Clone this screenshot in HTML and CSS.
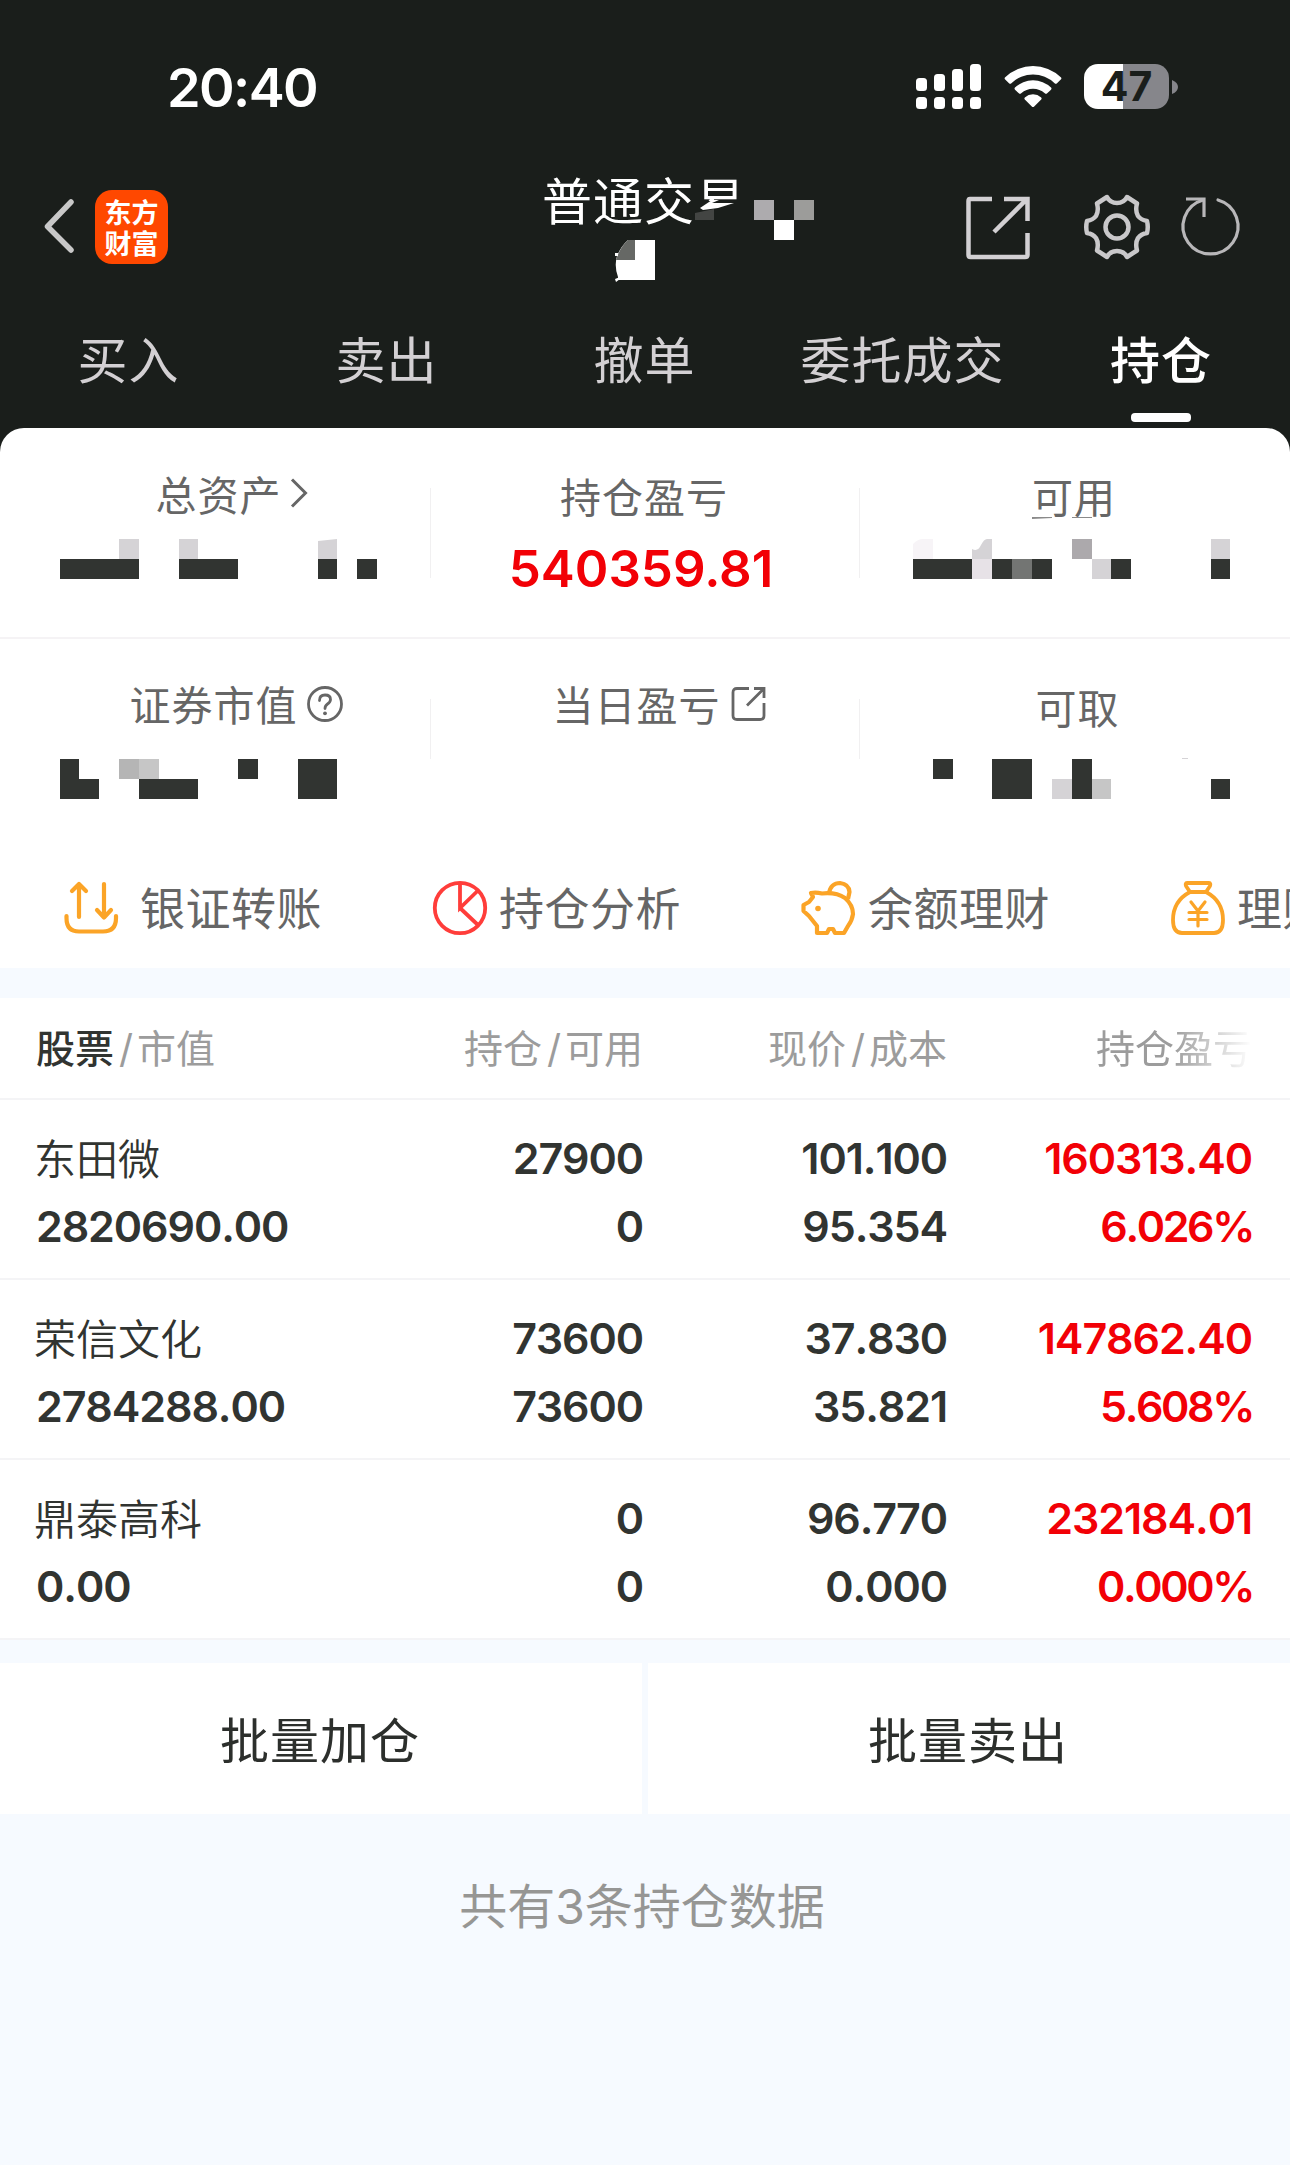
FILE: index.html
```html
<!DOCTYPE html>
<html lang="zh-CN">
<head>
  <meta charset="UTF-8">
  <meta name="viewport" content="width=device-width, initial-scale=1.0">
  <title>普通交易 - 持仓</title>
  <link rel="stylesheet" href="styles.css">
</head>
<body>
  <header class="top">
    <div class="status">
      <span class="time">20:40</span>
      <div class="status-icons">
        <svg width="65" height="45" viewBox="0 0 65 45" fill="#fff">
          <rect x="0" y="14" width="11" height="13" rx="3.5"/>
          <rect x="18" y="10" width="11" height="17" rx="3.5"/>
          <rect x="36" y="5" width="11" height="22" rx="3.5"/>
          <rect x="54" y="0" width="11" height="27" rx="3.5"/>
          <rect x="0" y="33" width="11" height="12" rx="3.5"/>
          <rect x="18" y="33" width="11" height="12" rx="3.5"/>
          <rect x="36" y="33" width="11" height="12" rx="3.5"/>
          <rect x="54" y="33" width="11" height="12" rx="3.5"/>
        </svg>
        <svg class="wifi" width="58" height="43" viewBox="0 0 58 43" fill="#fff">
          <path d="M1.2 12.2 Q0 13.4 1.2 14.6 L5 18.2 Q6.2 19.2 7.4 18.2 A31 31 0 0 1 50.6 18.2 Q51.8 19.2 53 18.2 L56.8 14.6 Q58 13.4 56.8 12.2 A40 40 0 0 0 1.2 12.2Z"/>
          <path d="M11 22.5 Q10 23.6 11 24.7 L14.8 28.3 Q16 29.3 17.2 28.3 A17.5 17.5 0 0 1 40.8 28.3 Q42 29.3 43.2 28.3 L47 24.7 Q48 23.6 47 22.5 A26 26 0 0 0 11 22.5Z"/>
          <path d="M20.8 32.4 Q19.8 33.4 20.8 34.5 L27.8 41.6 Q29 42.6 30.2 41.6 L37.2 34.5 Q38.2 33.4 37.2 32.4 A12.6 12.6 0 0 0 20.8 32.4Z"/>
        </svg>
        <div class="battery"><span>47</span></div>
        <svg class="nub" width="6" height="14" viewBox="0 0 6 14"><path d="M0 0 Q6 2.500 6 7 T0 14Z" fill="#86868b"/></svg>
      </div>
    </div>

    <div class="navbar">
      <div class="nav-left">
        <svg width="32" height="56" viewBox="0 0 32 56" fill="none" stroke="#c8c8c8" stroke-width="5.500" stroke-linecap="round" stroke-linejoin="round"><path d="M29 4 L5.500 28.500 L29 52"/></svg>
        <div class="logo">东方<br>财富</div>
      </div>
      <h1 class="title">普通交易
        <svg class="title-mask" width="290" height="108" viewBox="0 0 290 108">
          <path d="M157 29 H206 V62 H157Z" fill="#1a1e1b"/>
          <path d="M172 28 L179 28 L172 31 H194 L178 36 L163 38 L160 36Z" fill="#fff"/>
          <path d="M155 41 L174 37 V48 H155Z" fill="#434543"/>
          <rect x="214" y="28" width="20" height="20" fill="#adabae"/>
          <rect x="254" y="28" width="20" height="20" fill="#9c9c9a"/>
          <rect x="234" y="48" width="20" height="20" fill="#fff"/>
          <path d="M88 68 H115 V108 H78 V105 Q74 94 77 84 Q81 74 88 68Z" fill="#fff"/>
          <path d="M88 68 H95 V88 H76 Q80 75 88 68Z" fill="#666865"/>
          <path d="M75 81 h3 v3 h-3Z M75 107 l5 -2 v2 l-4 3Z" fill="#fff"/>
        </svg>
      </h1>
      <div class="nav-right">
        <svg width="64" height="64" viewBox="0 0 64 64" fill="none" stroke="#d2d0d3" stroke-width="4.500">
          <path d="M26 3 H4 Q2.500 3 2.500 5 V59 Q2.500 61 4.500 61 H59 Q61.500 61 61.500 59 V37"/>
          <path d="M38 3 H61.500 V25 M61 3 L28 36"/>
        </svg>
        <svg class="gear" width="68" height="66" viewBox="0 0 68 66" fill="none" stroke="#c9c8ca" stroke-width="4.500" stroke-linejoin="round">
          <path d="M24 3 Q27 9 34 9 Q41 9 44 3 L54 9.500 Q52 17 55 22 Q58 26 64 27 Q65.500 33 64 39 Q58 40 55 44 Q52 49 54 56.500 L44 63 Q41 57 34 57 Q27 57 24 63 L14 56.500 Q16 49 13 44 Q10 40 4 39 Q2.500 33 4 27 Q10 26 13 22 Q16 17 14 9.500Z"/>
          <circle cx="34" cy="33" r="11.500"/>
        </svg>
        <svg class="refresh" width="60" height="60" viewBox="0 0 60 60" fill="none" stroke="#b8b7b9">
          <path d="M36 4 A27.500 27.500 0 1 1 21 4" stroke-width="3.200" stroke-linecap="round"/>
          <path d="M4 3 H22 V21" stroke-width="3.200"/>
        </svg>
      </div>
    </div>

    <nav class="tabs">
      <a class="tab">买入</a>
      <a class="tab">卖出</a>
      <a class="tab">撤单</a>
      <a class="tab">委托成交</a>
      <a class="tab active">持仓</a>
    </nav>
  </header>

  <section class="summary">
    <div class="stats">
      <div class="stat">
        <div class="label up">总资产<svg width="20" height="32" viewBox="0 0 20 32" fill="none" stroke="#666" stroke-width="3"><path d="M3 2.500 L16.500 16 L3 29.500"/></svg></div>
        <svg class="mosaic" width="430" height="40" viewBox="0 0 430 40">
          <path d="M119 0h20v20h-20z M179 0h19v20h-19z M318 2l19-2v20h-19z" fill="#d5d3d6"/>
          <path d="M60 20h79v20H60z M179 20h59v20h-59z M318 20h19v20h-19z M357 20h20v20h-20z" fill="#313431"/>
        </svg>
      </div>
      <div class="stat">
        <div class="label">持仓盈亏</div>
        <div class="profit">540359.81</div>
      </div>
      <div class="stat">
        <div class="label">可用</div>
        <svg class="mosaic" width="430" height="40" viewBox="0 0 430 40">
          <path d="M172-22h20v1l-20 1z M212-22h20v1h-20z" fill="#8a8a8a"/>
          <path d="M53 5Q58 0 63 0H73V20H53z" fill="#f7f4f7"/>
          <path d="M112 10q6 3 9-4q3-6 6-6h5v20h-20z M351 0h19v20h-19z M232 20h19v20h-19z" fill="#d5d3d6"/>
          <path d="M212 0h20v20h-20z" fill="#aca9ac"/>
          <path d="M53 20h59v20H53z M132 20h20v20h-20z M172 20h20v20h-20z M251 20h20v20h-20z M351 20h19v20h-19z" fill="#313431"/>
          <path d="M112 20h20v20h-20z" fill="#e7e2e7"/>
          <path d="M152 20h20v20h-20z" fill="#737573"/>
        </svg>
      </div>
    </div>
    <div class="stats second">
      <div class="stat">
        <div class="label market">证券市值<svg class="help" width="36" height="36" viewBox="0 0 36 36" fill="none" stroke="#666" stroke-width="2.800"><circle cx="18" cy="18" r="16.500"/><path d="M12.500 14.500 Q12.500 9 18 9 Q23.500 9 23.500 13.500 Q23.500 16 20.500 18 Q18 19.700 18 22.500" stroke-linecap="round"/><circle cx="18" cy="27.300" r="1.900" fill="#666" stroke="none"/></svg></div>
        <svg class="mosaic" width="430" height="40" viewBox="0 0 430 40">
          <path d="M60 0h19v20h20v20H60z M139 20h59v20h-59z M238 0h20v20h-20z M298 0h39v40h-39z" fill="#313431"/>
          <path d="M119 0h20v20h-20z" fill="#b5b5b5"/>
          <path d="M139 0h20v20h-20z" fill="#c6c6c6"/>
        </svg>
      </div>
      <div class="stat">
        <div class="label today">当日盈亏<svg class="out" width="36" height="36" viewBox="0 0 36 36" fill="none" stroke="#666" stroke-width="2.800"><path d="M18 2.500 H6 Q2 2.500 2 6.500 V29.500 Q2 33.500 6 33.500 H29 Q33 33.500 33 29.500 V17"/><path d="M23 2.500 H33 V12 M32.500 3 L16 19.500"/></svg></div>
      </div>
      <div class="stat">
        <div class="label down">可取</div>
        <svg class="mosaic" width="430" height="40" viewBox="0 0 430 40">
          <path d="M73 0h20v20H73z M132 0h40v40h-40z M212 0h20v40h-20z M351 20h19v20h-19z" fill="#313431"/>
          <path d="M192 20h20v20h-20z M322-1h6v1h-6z" fill="#d5d3d6"/>
          <path d="M232 20h19v20h-19z" fill="#c6c6c6"/>
        </svg>
      </div>
    </div>

    <div class="quick">
      <div class="quick-item first">
        <svg width="56" height="56" viewBox="0 0 56 56" fill="none" stroke="#fba427" stroke-width="4.200" stroke-linecap="round" stroke-linejoin="round">
          <path d="M3.500 36 V38 Q3.500 51.500 16 51.500 H40 Q53 51.500 53 38 V36"/>
          <path d="M16 37 V4 M9 11 L16 4 L23 11 M41 4 V37 M34 30 L41 37.500 L48 30"/>
        </svg>
        <span>银证转账</span>
      </div>
      <div class="quick-item">
        <svg width="56" height="56" viewBox="0 0 56 56" fill="none" stroke="#ff3d3a" stroke-width="3.800">
          <circle cx="28" cy="28" r="25.200"/>
          <path d="M28 3 V28 L46 10.500 M28 28 L46 45"/>
        </svg>
        <span>持仓分析</span>
      </div>
      <div class="quick-item">
        <svg width="56" height="56" viewBox="0 0 56 56" fill="none" stroke="#fba427" stroke-width="4.200" stroke-linejoin="round">
          <path d="M10 13 Q15 12 21 13.500 Q35 12 44 18 Q52 25 52 34 Q51 41 47 46 L43 53 H34 L32 49 H28 L26 53 H16 V46 L8 36 L2.500 31 V25 L8 22 L12 17Z"/>
          <path d="M28 13 Q30 3 39 3 Q48 4 48.500 12 L47 19"/>
          <circle cx="17" cy="28.500" r="2.800" fill="#fba427" stroke="none"/>
        </svg>
        <span>余额理财</span>
      </div>
      <div class="quick-item">
        <svg width="56" height="56" viewBox="0 0 56 56" fill="none" stroke="#fba427" stroke-width="3.800" stroke-linejoin="round">
          <path d="M17 3 H39 Q41 3 40 6 L36 12 H20 L16 6 Q15 3 17 3Z"/>
          <path d="M20 12 Q3 21 3 40 Q3 53 12 53 H44 Q53 53 53 40 Q53 21 36 12"/>
          <path d="M21 22 L28 31 L35 22 M28 31 V46 M19 32.500 H37 M19 39.500 H37" stroke-width="3.200" stroke-linecap="round"/>
        </svg>
        <span>理财</span>
      </div>
    </div>
  </section>

  <section class="holdings">
    <div class="row thead">
      <div class="cell"><span><b>股票</b><i>/</i>市值</span></div>
      <div class="cell"><span>持仓<i>/</i>可用</span></div>
      <div class="cell"><span>现价<i>/</i>成本</span></div>
      <div class="cell fade"><span>持仓盈亏</span></div>
    </div>
    <div class="row">
      <div class="cell"><span class="name">东田微</span><span>2820690.00</span></div>
      <div class="cell"><span>27900</span><span>0</span></div>
      <div class="cell"><span>101.100</span><span>95.354</span></div>
      <div class="cell red"><span>160313.40</span><span class="percent">6.026%</span></div>
    </div>
    <div class="row">
      <div class="cell"><span class="name">荣信文化</span><span>2784288.00</span></div>
      <div class="cell"><span>73600</span><span>73600</span></div>
      <div class="cell"><span>37.830</span><span>35.821</span></div>
      <div class="cell red"><span>147862.40</span><span class="percent">5.608%</span></div>
    </div>
    <div class="row">
      <div class="cell"><span class="name">鼎泰高科</span><span>0.00</span></div>
      <div class="cell"><span>0</span><span>0</span></div>
      <div class="cell"><span>96.770</span><span>0.000</span></div>
      <div class="cell red"><span>232184.01</span><span class="percent">0.000%</span></div>
    </div>
  </section>

  <div class="actions">
    <button class="btn">批量加仓</button>
    <button class="btn">批量卖出</button>
  </div>
  <p class="total">共有3条持仓数据</p>
</body>
</html>
```

FILE: styles.css
```css
* {
  box-sizing: border-box;
}
body {
  margin: 0;
  width: 1290px;
  height: 2165px;
  overflow: hidden;
  background: #f6faff;
  color: #313431;
  font-family: Inter, "Noto Sans CJK SC", sans-serif;
}
svg {
  display: block;
  flex: none;
  overflow: visible;
}

/* header */
.top {
  height: 452px;
  background: #1a1e1b;
}
.status {
  height: 174px;
  padding: 64px 112px 0 167px;
  display: flex;
  justify-content: space-between;
}
.time {
  height: 46px;
  line-height: 48px;
  font-size: 54px;
  font-weight: 600;
  letter-spacing: -1.6px;
  color: #fff;
}
.status-icons {
  display: flex;
  height: 45px;
}
.wifi {
  margin: 1px 22px 0 23px;
}
.battery {
  width: 85px;
  height: 45px;
  border-radius: 14px;
  background: linear-gradient(to right, #fff 39px, #86868b 39px);
  text-align: center;
}
.battery span {
  font-size: 41px;
  font-weight: 700;
  line-height: 45px;
  color: #1a1e1b;
}
.nub {
  margin: 16px 0 0 3px;
}
.navbar {
  height: 144px;
  display: grid;
  grid-template-columns: 542px 1fr 324px;
}
.nav-left {
  display: flex;
  padding: 16px 0 0 42px;
  gap: 21px;
}
.nav-left svg {
  margin-top: 8px;
}
.logo {
  width: 73px;
  height: 74px;
  padding-top: 6px;
  border-radius: 17px;
  background: #ff4800;
  font-family: "Noto Sans CJK SC", sans-serif;
  font-size: 27px;
  font-weight: 700;
  line-height: 31px;
  text-align: center;
  color: #fff;
}
.title {
  position: relative;
  margin: 0;
  font-size: 50px;
  font-weight: 400;
  line-height: 56px;
  letter-spacing: 1px;
  color: #fff;
}
.title-mask {
  position: absolute;
  left: -2px;
  top: -2px;
}
.nav-right {
  display: flex;
  padding-top: 22px;
}
.gear {
  margin: -2px 0 0 53px;
}
.refresh {
  margin: 0 0 0 31px;
}
.tabs {
  display: grid;
  grid-template-columns: repeat(5, 1fr);
}
.tab {
  height: 104px;
  padding-right: 1px;
  font-size: 50px;
  line-height: 87px;
  letter-spacing: 1px;
  text-align: center;
  color: #d3d0d3;
}
.tab.active {
  padding-right: 0;
  font-weight: 500;
  color: #fff;
}
.tab.active::after {
  content: "";
  display: block;
  width: 60px;
  height: 9px;
  margin: 8px auto 0;
  border-radius: 4px;
  background: #fff;
}

/* account summary */
.summary {
  height: 540px;
  margin-top: -24px;
  border-radius: 24px 24px 0 0;
  background: #fff;
  overflow: hidden;
}
.stats {
  display: grid;
  grid-template-columns: repeat(3, 1fr);
  height: 211px;
  padding-top: 60px;
  border-bottom: 2px solid #f5f3f5;
}
.stats.second {
  height: 212px;
  border-bottom: 0;
}
.stat {
  display: flex;
  flex-direction: column;
  height: 90px;
  border-right: 1px solid #f1f0f1;
}
.stat:last-child {
  border-right: 0;
}
.second .stat {
  height: 60px;
}
.label {
  display: flex;
  flex: none;
  justify-content: center;
  align-items: center;
  height: 14px;
  margin-bottom: 6px;
  padding-right: 2px;
  font-size: 41px;
  letter-spacing: 1px;
  color: #666;
  white-space: nowrap;
}
.label.up {
  height: 10px;
  margin-bottom: 10px;
  padding: 0 0 0 34px;
}
.label.up svg {
  margin-left: 7px;
}
.second .label {
  height: 8px;
  margin-bottom: 12px;
}
.label.market {
  padding: 0 0 0 42px;
}
.label.today {
  padding: 0 0 0 29px;
}
.help {
  margin: 2px 0 0 9px;
}
.out {
  margin: 2px 0 0 10px;
}
.second .label.down {
  height: 13px;
  margin-bottom: 7px;
  padding: 0 0 0 5px;
}
.mosaic {
  margin-top: 31px;
}
.second .mosaic {
  margin-top: 40px;
}
.profit {
  margin-top: 33px;
  padding-right: 8px;
  text-align: center;
  font-size: 51px;
  font-weight: 600;
  line-height: 56px;
  color: #f20006;
}

/* shortcuts */
.quick {
  display: flex;
  padding-left: 63px;
  height: 117px;
}
.quick-item {
  display: flex;
  flex: none;
  align-items: center;
  width: 369px;
  height: 113px;
  gap: 11px;
  font-size: 45px;
  letter-spacing: 0.5px;
  color: #666;
}
.quick-item span {
  padding-bottom: 3px;
}
.quick-item.first {
  gap: 21px;
}

/* holdings table */
.holdings {
  margin-top: 30px;
  background: #fff;
}
.row {
  display: grid;
  grid-template-columns: 307px 300px 304px 305px;
  height: 180px;
  padding-left: 36px;
  padding-top: 24px;
  border-bottom: 2px solid #f4f4f6;
}
.cell {
  display: flex;
  flex-direction: column;
  text-align: right;
  font-size: 43px;
  font-weight: 600;
  font-kerning: none;
  letter-spacing: -1.1px;
  line-height: 68px;
}
.cell:first-child {
  text-align: left;
}
.name {
  margin: 2px 0 -2px -2px;
  font-size: 42px;
  font-weight: 350;
  letter-spacing: 0;
}
.red {
  color: #f20006;
}
.percent {
  margin-right: -1px;
  letter-spacing: -2.4px;
}
.thead {
  height: 102px;
  padding-top: 17px;
}
.thead .cell {
  font-size: 39px;
  font-weight: 400;
  letter-spacing: 0;
  color: #9c9c9c;
}
.thead b {
  font-weight: 500;
  color: #313431;
}
.thead i {
  font-style: normal;
  margin: 0 4px 0 5px;
}
.thead .fade {
  -webkit-mask-image: linear-gradient(to right, #000 225px, transparent 305px);
  mask-image: linear-gradient(to right, #000 225px, transparent 305px);
}

/* footer */
.actions {
  display: grid;
  grid-template-columns: 1fr 1fr;
  gap: 6px;
  margin-top: 23px;
}
.btn {
  height: 151px;
  padding: 0 2px 2px 0;
  border: 0;
  background: #fff;
  font: inherit;
  font-size: 49px;
  letter-spacing: 1px;
  color: #2c2f2c;
}
.total {
  margin: 58px 0 0;
  padding-right: 6px;
  text-align: center;
  font-size: 48px;
  line-height: 70px;
  color: #969694;
}
```
